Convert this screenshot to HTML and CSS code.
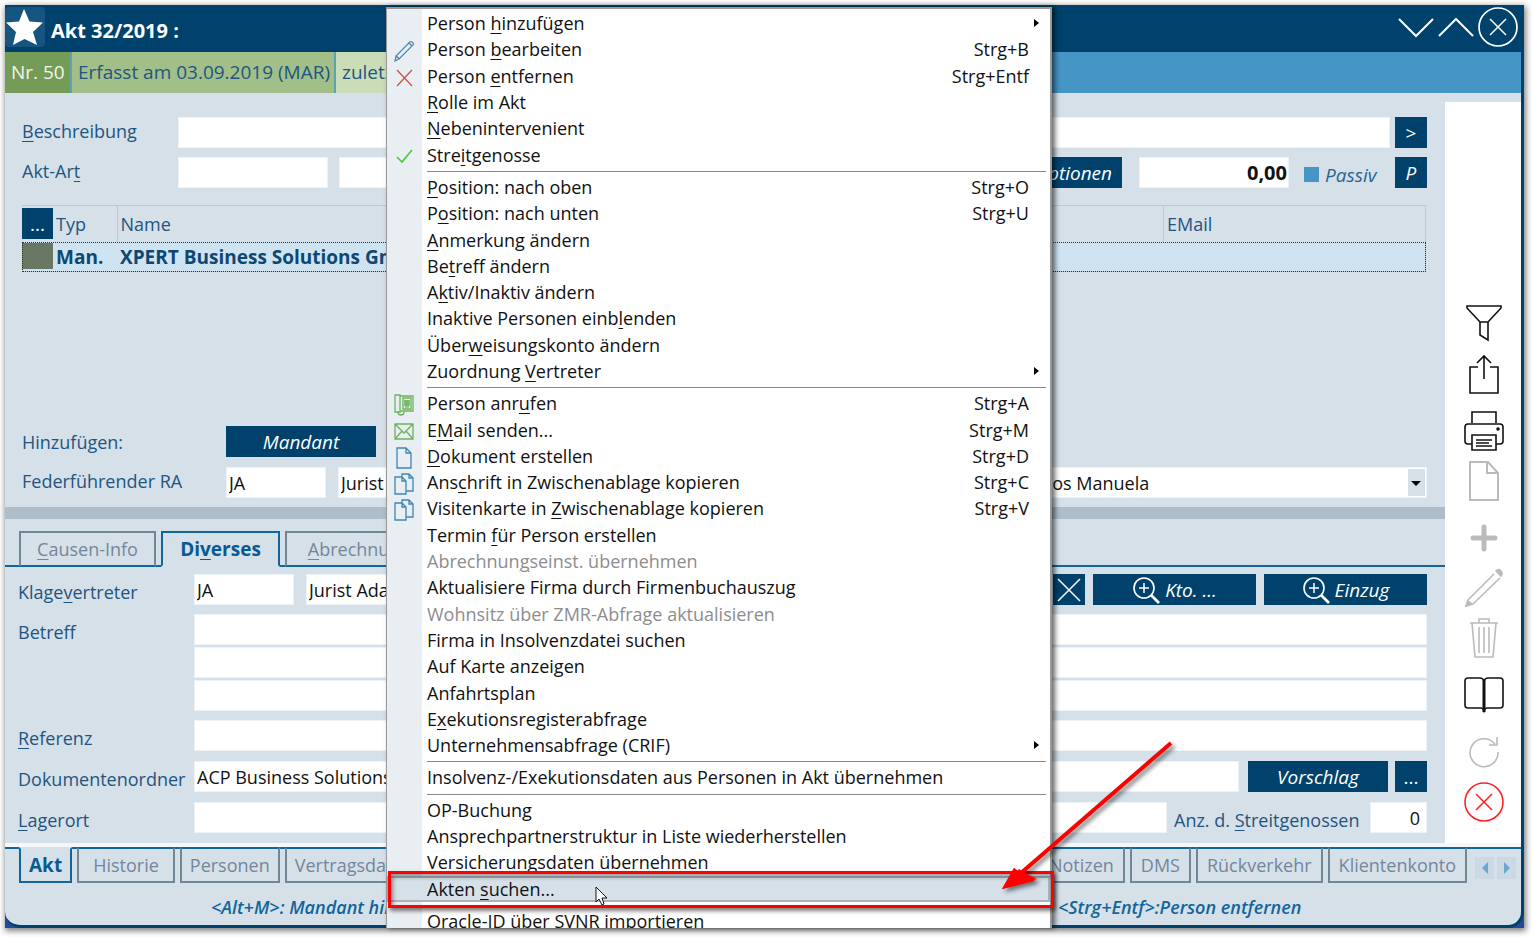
FILE: index.html
```html
<!DOCTYPE html>
<html lang="de">
<head>
<meta charset="utf-8">
<title>Akt 32/2019</title>
<link rel="stylesheet" href="styles.css">
</head>
<body>
<div class="frame">
<div class="window">
  <header class="titlebar">
    <button class="star" aria-label="Favorit"><svg width="40" height="40" viewBox="0 0 40 40"><path fill="#fff" d="M19 2l5.500 12.500L38 15.500 28 25l4 13-12.500-6L8 38l3-13L1 15.500l13-1z"/></svg></button>
    <h1>Akt 32/2019 :</h1>
    <div class="winctl">
      <button aria-label="Weiter"><svg width="36" height="40" viewBox="0 0 36 40"><path d="M1 12l17 17 17-17" fill="none" stroke="#fff" stroke-width="2"/></svg></button>
      <button aria-label="Zurück"><svg width="36" height="40" viewBox="0 0 36 40"><path d="M1 29l17-17 17 17" fill="none" stroke="#fff" stroke-width="2"/></svg></button>
      <button aria-label="Schließen"><svg width="40" height="40" viewBox="0 0 40 40" fill="none" stroke="#fff"><circle cx="20" cy="20" r="19" stroke-width="1.7"/><path d="M12 12l16 16M28 12L12 28" stroke-width="1.5"/></svg></button>
    </div>
  </header>
  <div class="infobar">
    <span class="nr">Nr. 50</span><span class="created">Erfasst am 03.09.2019 (MAR)</span><span class="changed">zuletzt</span>
  </div>
  <div class="main">
    <div class="content">
      <section class="upper">
        <div class="row">
          <label for="desc"><u>B</u>eschreibung</label>
          <input id="desc" class="grow"><button class="btn sq tight">&gt;</button>
        </div>
        <div class="row second">
          <label for="art">Akt-Ar<u>t</u></label>
          <input id="art" class="w150"><input class="grow art2" aria-label="Akt-Art Text">
          <button class="btn w150 opt">Optionen</button>
          <input class="w150 amount" value="0,00" aria-label="Betrag">
          <label class="passiv"><input type="checkbox">Passiv</label>
          <button class="btn sq ital">P</button>
        </div>
        <table class="persons">
          <colgroup><col class="c1"><col class="c2"><col><col class="c4"></colgroup>
          <thead><tr><th><button class="btn sq">...</button></th><th>Typ</th><th>Name</th><th>EMail</th></tr></thead>
          <tbody><tr><td><span class="swatch"></span></td><td>Man.</td><td>XPERT Business Solutions GmbH</td><td></td></tr></tbody>
        </table>
        <div class="row add"><span class="lbl">Hinzufügen:</span><button class="btn w150">Mandant</button></div>
        <div class="row lead">
          <label for="ra">Federführender RA</label>
          <input id="ra" class="w100" value="JA"><input class="grow name2" value="Jurist Adam" aria-label="Name RA">
          <select aria-label="Sachbearbeiter"><option>Carlos Manuela</option></select>
        </div>
      </section>
      <div class="splitter"></div>
      <nav class="tabs top">
        <button><u>C</u>ausen-Info</button><button class="on">Di<u>v</u>erses</button><button class="third"><u>A</u>brechnung</button>
      </nav>
      <section class="lower">
        <div class="row">
          <label for="kv">Klage<u>v</u>ertreter</label>
          <input id="kv" class="w100" value="JA"><input class="grow name2" value="Jurist Adam" aria-label="Name Klagevertreter">
          <button class="btn sq cross" aria-label="Entfernen"><svg width="26" height="26" viewBox="0 0 26 26"><path d="M2 2l22 22M24 2L2 24" stroke="#fff" stroke-width="1.5"/></svg></button>
          <button class="btn wide"><svg width="28" height="28" viewBox="0 0 28 28" fill="none" stroke="#fff"><circle cx="12" cy="12" r="10" stroke-width="1.6"/><path d="M12 7v10M7 12h10" stroke-width="1.5"/><path d="M19 19l8 8" stroke-width="2.6"/></svg>Kto. ...</button>
          <button class="btn wide"><svg width="28" height="28" viewBox="0 0 28 28" fill="none" stroke="#fff"><circle cx="12" cy="12" r="10" stroke-width="1.6"/><path d="M12 7v10M7 12h10" stroke-width="1.5"/><path d="M19 19l8 8" stroke-width="2.6"/></svg>Einzug</button>
        </div>
        <div class="row betreff">
          <label for="b1">Betreff</label>
          <div class="stack grow"><input id="b1"><input aria-label="Betreff 2"><input aria-label="Betreff 3"></div>
        </div>
        <div class="row"><label for="ref"><u>R</u>eferenz</label><input id="ref" class="grow"></div>
        <div class="row g10"><label for="dok">Dokumentenordner</label><input id="dok" class="grow" value="ACP Business Solutions"><button class="btn vor">Vorschlag</button><button class="btn sq">...</button></div>
        <div class="row g10"><label for="lag"><u>L</u>agerort</label><input id="lag" class="grow"><label class="anz" for="anz">Anz. d. <u>S</u>treitgenossen</label><input id="anz" class="num" value="0"></div>
      </section>
    </div>
    <aside class="side">
      <button aria-label="Filter"><svg viewBox="0 0 40 40"><path d="M3 2h34v2L24 18v18l-8-5V18L3 4zM16 18h8"/></svg></button>
      <button aria-label="Teilen"><svg viewBox="0 0 40 40"><path d="M14 13H6v26h28V13h-8M20 25V2M13 9l7-7 7 7"/></svg></button>
      <button class="gap" aria-label="Drucken"><svg viewBox="0 0 40 40"><path d="M8 12V1h24v11M8 33H4q-3 0-3-3V16q0-3 3-3h32q3 0 3 3v14q0 3-3 3h-4M8 24h24v15H8zM12 29h16M12 32h13M12 35h16"/><circle cx="34" cy="18" r="1" fill="#111"/></svg></button>
      <button class="dim" aria-label="Neues Dokument"><svg viewBox="0 0 40 40"><path d="M6 1h18l10 11v27H6zM23 1v11h11" stroke-width="2"/></svg></button>
      <button class="dim gap plus" aria-label="Hinzufügen"><svg viewBox="0 0 40 40"><path d="M20 9v22M9 20h22"/></svg></button>
      <button class="dim" aria-label="Bearbeiten"><svg viewBox="0 0 40 40"><path d="M4 32L30 6M9 36L36 10M4 32l-2 6 7-2"/><path d="M32 3q3-3 5 0 2 3 0 5z M2 38l2-5 4 3z" fill="#bbb"/></svg></button>
      <button class="dim" aria-label="Löschen"><svg viewBox="0 0 40 40"><path d="M6 5h28M15 5V1h10v4M8 5l3 34h18l3-34M15 9v26M20 9v26M25 9v26"/></svg></button>
      <button class="gap" aria-label="Buch"><svg viewBox="0 0 40 40"><path d="M20 6q-1-3-4-3H4q-3 0-3 3v24q0 3 3 3h13q2 0 3 3 1-3 3-3h13q3 0 3-3V6q0-3-3-3H24q-3 0-4 3z"/><path d="M20 5v32" stroke-width="3"/></svg></button>
      <button class="dim gap" aria-label="Aktualisieren"><svg viewBox="0 0 40 40"><path d="M34 20A14 14 0 1 1 31 12M25 13h8V5"/></svg></button>
      <button class="red" aria-label="Abbrechen"><svg viewBox="0 0 40 40"><circle cx="20" cy="20" r="19"/><path d="M12 12l16 16M28 12L12 28"/></svg></button>
    </aside>
  </div>
  <nav class="tabs bottom">
    <button class="on akt">Akt</button><button>Historie</button><button class="mid">Personen</button><button class="mid">Vertragsdaten</button>
    <button class="push">Notizen</button><button class="end">DMS</button><button class="end">Rückverkehr</button><button class="end">Klientenkonto</button>
    <span class="scroll"><button aria-label="Links"><svg width="6" height="12"><path d="M6 0v12L0 6z"/></svg></button><button aria-label="Rechts"><svg width="6" height="12"><path d="M0 0v12l6-6z"/></svg></button></span>
  </nav>
  <footer class="status"><span>&lt;Alt+M&gt;: Mandant hinzu</span><span class="st2">&lt;Strg+Entf&gt;:Person entfernen</span></footer>
</div>

<div class="menu">
<div class="items" role="menu">
  <button role="menuitem"><span class="t">Person <u>h</u>inzufügen</span><i class="arr"></i></button>
  <button role="menuitem"><svg class="ic" width="20" height="22" viewBox="0 0 20 22" fill="none" stroke="#3f86b5" stroke-width="1.2"><path d="M1 21l1-5L15 3q1-2 3-1t1 3L6 18zM2 16l4 3M15 3l3 3"/></svg><span class="t">Person <u>b</u>earbeiten</span><kbd>Strg+B</kbd></button>
  <button role="menuitem"><svg class="ic" width="20" height="22" viewBox="0 0 20 22" stroke="#c0504d" stroke-width="1.2"><path d="M3 3l15 16M18 3L3 19"/></svg><span class="t">Person <u>e</u>ntfernen</span><kbd>Strg+Entf</kbd></button>
  <button role="menuitem"><span class="t"><u>R</u>olle im Akt</span></button>
  <button role="menuitem"><span class="t"><u>N</u>ebenintervenient</span></button>
  <button role="menuitem"><svg class="ic" width="20" height="22" viewBox="0 0 20 22" fill="none" stroke="#4c3" stroke-width="1.6"><path d="M3 12l5 5L18 5"/></svg><span class="t">Stre<u>i</u>tgenosse</span></button>
  <hr>
  <button role="menuitem"><span class="t"><u>P</u>osition: nach oben</span><kbd>Strg+O</kbd></button>
  <button role="menuitem"><span class="t">P<u>o</u>sition: nach unten</span><kbd>Strg+U</kbd></button>
  <button role="menuitem"><span class="t"><u>A</u>nmerkung ändern</span></button>
  <button role="menuitem"><span class="t">Be<u>t</u>reff ändern</span></button>
  <button role="menuitem"><span class="t">A<u>k</u>tiv/Inaktiv ändern</span></button>
  <button role="menuitem"><span class="t">Inaktive Personen einb<u>l</u>enden</span></button>
  <button role="menuitem"><span class="t">Über<u>w</u>eisungskonto ändern</span></button>
  <button role="menuitem"><span class="t">Zuordnung <u>V</u>ertreter</span><i class="arr"></i></button>
  <hr>
  <button role="menuitem"><svg class="ic" width="20" height="22" viewBox="0 0 20 22" fill="none" stroke="#6cb45c" stroke-width="1.3"><path d="M1 1h5v17H1zM6 2h13v15H6M9 4h8v11H9zM10 7h6M10 9h6M10 11h6M12 6v8M14 6v8M4 18q0 3 3 3t3-3"/></svg><span class="t">Person anr<u>u</u>fen</span><kbd>Strg+A</kbd></button>
  <button role="menuitem"><svg class="ic" width="20" height="22" viewBox="0 0 20 22" fill="none" stroke="#6cb45c" stroke-width="1.3"><path d="M1 4h18v15H1zM1 4l9 9 9-9M1 19l7-8M19 19l-7-8"/></svg><span class="t">E<u>M</u>ail senden...</span><kbd>Strg+M</kbd></button>
  <button role="menuitem"><svg class="ic" width="20" height="22" viewBox="0 0 20 22" fill="none" stroke="#3f86b5" stroke-width="1.3"><path d="M3 1h9l5 5v15H3zM12 1v5h5"/></svg><span class="t"><u>D</u>okument erstellen</span><kbd>Strg+D</kbd></button>
  <button role="menuitem"><svg class="ic" width="20" height="22" viewBox="0 0 20 22" fill="none" stroke="#3f86b5" stroke-width="1.3"><path d="M1 4h7l4 4v13H1zM8 4v4h4M8 4V1h7l4 4v13h-7M15 1v4h4"/></svg><span class="t">Ans<u>c</u>hrift in Zwischenablage kopieren</span><kbd>Strg+C</kbd></button>
  <button role="menuitem"><svg class="ic" width="20" height="22" viewBox="0 0 20 22" fill="none" stroke="#3f86b5" stroke-width="1.3"><path d="M1 4h7l4 4v13H1zM8 4v4h4M8 4V1h7l4 4v13h-7M15 1v4h4"/></svg><span class="t">Visitenkarte in <u>Z</u>wischenablage kopieren</span><kbd>Strg+V</kbd></button>
  <button role="menuitem"><span class="t">Termin <u>f</u>ür Person erstellen</span></button>
  <button role="menuitem" disabled><span class="t">Abrechnun<u>g</u>seinst. übernehmen</span></button>
  <button role="menuitem"><span class="t">Aktualisiere Firma durch Firmenbuchauszug</span></button>
  <button role="menuitem" disabled><span class="t">Wohnsitz über ZMR-Abfrage aktualisieren</span></button>
  <button role="menuitem"><span class="t">Firma in Insolvenzdatei suchen</span></button>
  <button role="menuitem"><span class="t">Auf Karte anzeigen</span></button>
  <button role="menuitem"><span class="t">Anfahrtsplan</span></button>
  <button role="menuitem"><span class="t">E<u>x</u>ekutionsregisterabfrage</span></button>
  <button role="menuitem"><span class="t">Unternehmensabfrage (CRIF)</span><i class="arr"></i></button>
  <hr>
  <button role="menuitem"><span class="t">Insolvenz-/Exekutionsdaten aus Personen in Akt übernehmen</span></button>
  <hr>
  <button role="menuitem"><span class="t">OP-Buchung</span></button>
  <button role="menuitem"><span class="t">Ansprechpartnerstruktur in Liste wiederherstellen</span></button>
  <button role="menuitem"><span class="t">Versicherungsdaten übernehmen</span></button>
  <button role="menuitem" class="hover"><span class="t">Akten <u>s</u>uchen...</span></button>
  <hr>
  <button role="menuitem"><span class="t">Oracle-ID über SVNR importieren</span></button>
</div>
</div>
<div class="mark"></div>
<svg class="pointer" width="14" height="20" viewBox="0 0 14 20"><path d="M1 1v15l3-3 3 6 2-1-2-6h5z" fill="#fff" stroke="#112" stroke-width="1"/></svg>
<svg class="arrow" width="180" height="160" viewBox="0 0 180 160"><path d="M172 4L22 134" stroke="#f00" stroke-width="4"/><path d="M3 150L15 129l7 5 5 5 -1 -5 12 6z" fill="#f00"/><path d="M3 150L15 129 26 141zM3 150L20 130l6 5 10 7z" fill="#f00"/></svg>
</div>
</body>
</html>
```
FILE: styles.css
```css
* { box-sizing: border-box; }
body { margin: 0; background: #fff; font: 18px/26px "Open Sans", "Noto Sans", sans-serif; color: #1f5580; overflow: hidden; }
button, input, select { font: inherit; color: inherit; border: 0; border-radius: 0; padding: 0; margin: 0; background: none; }
svg { display: block; flex: none; }
u { text-decoration-thickness: 1px; text-underline-offset: 3px; }

.frame { position: relative; margin: 5px 9px 9px 5px; min-height: calc(100vh - 14px); display: flex; background: linear-gradient(#d5e0e9 95%, #24499a 95%); box-shadow: 1px 2px 6px 1px rgba(0,0,0,.5); }
.window { flex: 1; min-width: 0; display: flex; flex-direction: column; background: #d5e0e9; border-right: 3px solid #00426b; border-bottom: 3px solid #00426b; border-radius: 0 0 16px 16px; }

.titlebar { display: flex; align-items: center; height: 47px; background: #00426b; color: #fff; padding-bottom: 3px; }
.titlebar h1 { flex: 1; margin: 8px 0 0 6px; font-size: 20px; font-weight: 700; line-height: 26px; }
.star { background: #15557f; border-radius: 4px; }
.winctl { display: flex; gap: 4px; }
.winctl button:last-child { margin-right: 3px; }

.infobar { display: flex; height: 41px; background: #4596c5; font-size: 19px; line-height: 41px; white-space: nowrap; }
.infobar span { border-right: 2px solid #5fa3ad; padding: 0 6px; }
.infobar .nr { background: #749c56; color: #f0f5ea; width: 67px; }
.infobar .created { background: #a2bf89; width: 264px; }
.infobar .changed { background: #cadcb8; width: 120px; }

.main { flex: 1; display: flex; padding-top: 9px; border-bottom: 4px solid #f3f7fa; }
.content { flex: 1; min-width: 0; display: flex; flex-direction: column; }
.upper { padding: 15px 18px 9px 17px; }
.row { display: flex; align-items: center; height: 31px; white-space: nowrap; }
.row label:first-child, .row .lbl { width: 156px; flex: none; }
.upper .row label:first-child { padding-bottom: 3px; }
.row input, .row select { height: 31px; background: #fff; color: #111; border: 1px solid #eef3f7; padding: 0 2px; min-width: 0; }
.row .grow { flex: 1; min-width: 0; }
.row .w150 { width: 150px; flex: none; }
.row .w100 { width: 100px; flex: none; }
.btn { display: flex; align-items: center; justify-content: center; gap: 5px; height: 31px; background: #00426b; color: #fff; font-size: 19px; font-style: italic; flex: none; }
.btn.sq { width: 32px; font-style: normal; }
.btn.ital { font-style: italic; }
.row .tight { margin-left: 5px; }
.row.second { margin-top: 9px; }
.row .art2 { margin-left: 11px; }
.row .opt { padding-left: 62px; width: 160px; justify-content: flex-end; padding-right: 10px; }
.row .amount { margin: 0 15px 0 17px; text-align: right; font-size: 20px; font-weight: 700; padding: 0 1px; }
.passiv { display: flex; align-items: center; gap: 6px; width: 91px; font-size: 19px; font-style: italic; padding-top: 4px; color: #2a6594; }
.row .passiv input { appearance: none; width: 15px; height: 15px; border: 0; margin: 0; background: #4596c5; }

.persons { width: calc(100% - 1px); margin-top: 17px; border-collapse: collapse; table-layout: fixed; text-align: left; border: 1px solid #b9cbd9; border-left: 0; }
.persons .c1 { width: 31px; }
.persons .c2 { width: 64px; }
.persons .c4 { width: 262px; }
.persons th { height: 36px; padding: 0 3px; font-weight: 400; border-left: 1px solid #b9cbd9; }
.persons th:nth-child(-n+2) { border-left: 0; padding: 0 3px; }
.persons th:first-child { padding: 0; }
.persons .btn.sq { width: 31px; }
.persons tbody tr { background: #cfe3f1; outline: 1px dotted #333; outline-offset: -1px; }
.persons td { height: 30px; padding: 2px 3px 0; font-size: 19px; font-weight: 700; color: #0d4872; white-space: nowrap; overflow: hidden; }
.persons td:first-child { padding: 0; }
.swatch { display: block; width: 31px; height: 26px; background: #6b7765; }

.row.add { margin-top: 154px; }
.row.lead { margin-top: 10px; position: relative; }
.row.add .lbl, .row.lead label:first-child { width: 204px; }
.row .name2 { margin-left: 12px; }
.row.lead select { width: 440px; appearance: none; padding-left: 31px; background: linear-gradient(#d5e0e9, #d5e0e9) right 1px center / 17px 27px no-repeat, #fff; }
.row.lead::after { content: ""; position: absolute; right: 6px; top: 14px; border: 5px solid transparent; border-top-color: #000; border-bottom: 0; }
.splitter { height: 12px; background: #aebdca; }

.tabs { display: flex; gap: 5px; white-space: nowrap; }
.tabs button { color: #74879a; border: 2px solid #6f8797; height: 36px; }
.tabs .on { color: #075a92; border-color: #11659b; font-size: 19px; font-weight: 700; }
.tabs.top { margin-top: 12px; padding-left: 14px; background: linear-gradient(#11659b, #11659b) 0 100% / 100% 2px no-repeat; }
.tabs.top button { border-bottom-color: #11659b; width: 137px; }
.tabs.top .on { width: 119px; border-bottom-color: #d5e0e9; }
.tabs.top .third { width: 148px; }

.lower { padding: 7px 18px 8px 13px; display: flex; flex-direction: column; gap: 9px; }
.lower .row label { padding-top: 5px; }
.lower .row label:first-child { width: 176px; }
.lower .g10 { margin-top: 1px; }
.row.betreff { height: auto; align-items: flex-start; }
.stack { display: flex; flex-direction: column; gap: 2px; }
.lower .wide { width: 163px; margin-left: 8px; }
.lower .vor { width: 140px; margin: 0 7px 0 9px; }
.lower .anz { width: 203px; padding-left: 7px; }
.lower .num { width: 57px; text-align: right; padding-right: 6px; }

.side { width: 76px; flex: none; background: #fff; display: flex; flex-direction: column; align-items: center; justify-content: flex-end; gap: 10px; padding: 0 0 21px 2px; }
.side button { width: 40px; height: 40px; }
.side svg { width: 40px; height: 40px; fill: none; stroke: #111; stroke-width: 1.6; }
.side .gap { margin-top: 7px; }
.side .dim svg { stroke: #bbb; }
.side .plus svg { stroke-width: 5; stroke-linecap: round; }
.side .red svg { stroke: #f22; }

.tabs.bottom { padding-left: 14px; background: linear-gradient(#11659b, #11659b) 0 0 / 100% 2px no-repeat; }
.tabs.bottom button { border-top-color: #11659b; padding: 0 14px; }
.tabs.bottom .on { border-top-color: #d5e0e9; padding: 0 8px; }
.tabs.bottom .push { margin-left: auto; }
.tabs.bottom .mid { padding: 0 8px; }
.tabs.bottom .end, .tabs.bottom .push { padding: 0 9px; }
.scroll { display: flex; gap: 3px; padding: 10px 5px 0 3px; }
.tabs.bottom .scroll button { width: 19px; height: 22px; border: 0; padding: 0; background: #cbd9e4; display: flex; align-items: center; justify-content: center; }
.scroll path { fill: #6aa8d0; }
.status { display: flex; height: 42px; padding-left: 206px; line-height: 48px; font-style: italic; font-weight: 600; color: #11659b; white-space: nowrap; }
.st2 { margin-left: auto; width: 463px; }

/* context menu over the form */
.menu { position: absolute; left: 381px; top: 2px; bottom: 0; width: 666px; overflow: hidden; background: linear-gradient(90deg, #e9eef2 35px, #fff 35px); border: 1px solid #999; border-width: 2px 2px 0 1px; box-shadow: 3px 0 5px rgba(0,0,0,.6); color: #111; }
.items { position: absolute; inset: 1px 0 -6px; display: flex; flex-direction: column; }
.items button { flex: 1 1 0; min-height: 0; display: flex; align-items: center; position: relative; text-align: left; padding: 0 21px 0 40px; white-space: nowrap; line-height: 24px; }
.items button:disabled { color: #8d8d8d; }
.items .t { flex: 1; }
.items kbd { font: inherit; }
.items hr { flex: none; width: auto; height: 6px; margin: 0 4px 0 40px; border: 0; background: linear-gradient(#888, #888) 0 3px / 100% 1px no-repeat; }
.items .ic { position: absolute; left: 7px; top: 4px; }
.items .arr { border: 4px solid transparent; border-left: 5px solid #000; border-right: 0; margin-right: -10px; }
.items .hover { background: #d5e0e9; box-shadow: inset 0 0 0 2px #a9b3bb; }

.mark { position: absolute; left: 383px; top: 866px; width: 666px; height: 37px; border: 3px solid #f00; box-shadow: 2px 3px 4px rgba(0,0,0,.5), inset 2px 3px 4px rgba(0,0,0,.4); }
.pointer { position: absolute; left: 590px; top: 881px; }
.arrow { position: absolute; left: 994px; top: 734px; filter: drop-shadow(3px 3px 2px rgba(0,0,0,.5)); }
```
